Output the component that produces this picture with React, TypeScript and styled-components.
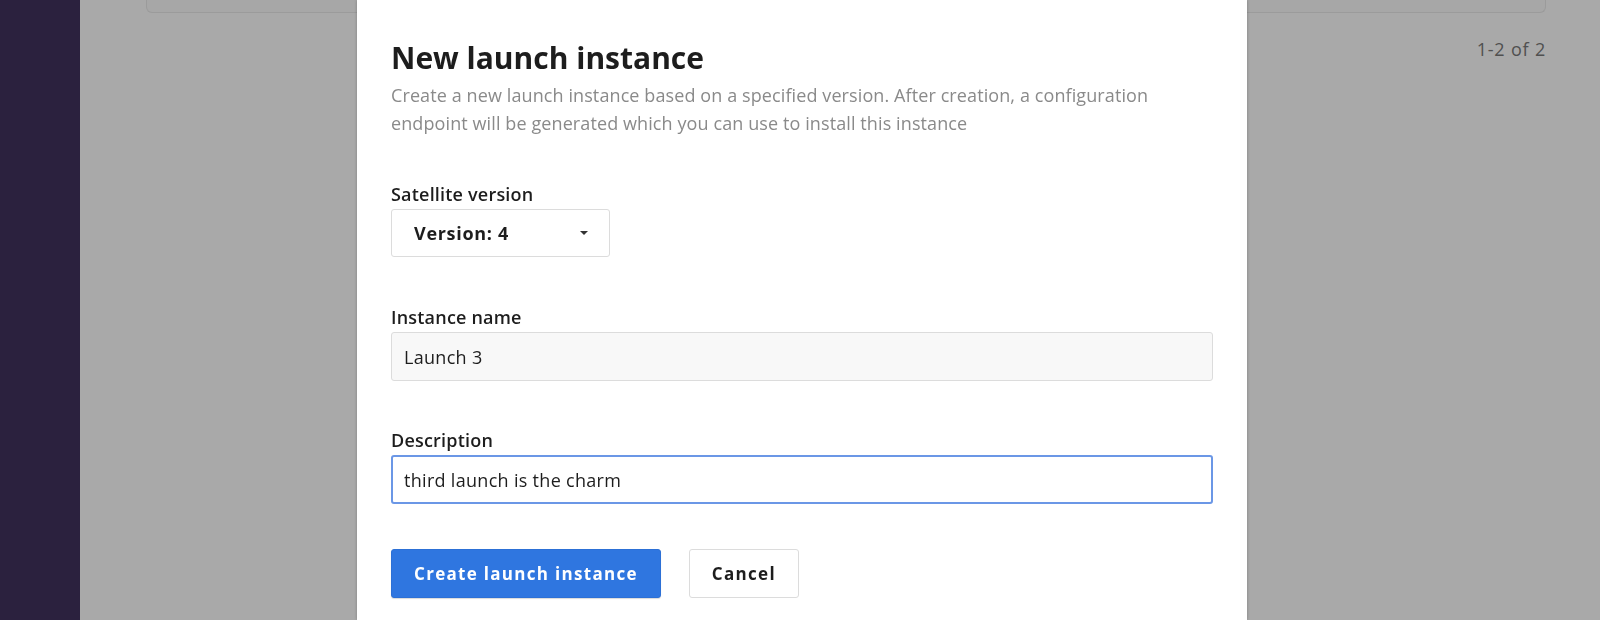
import * as React from 'react';
import styled, {createGlobalStyle} from 'styled-components';

const GlobalStyle = createGlobalStyle`
  html, body {
    margin: 0;
    padding: 0;
    height: 100%;
    overflow: hidden;
  }
  body {
    font-family: "Open Sans", "Noto Sans", "Liberation Sans", sans-serif;
    color: #1f1f1f;
  }
`;

const App = () => {
  const [version] = React.useState(4);
  const [name, setName] = React.useState('Launch 3');
  const [description, setDescription] = React.useState('third launch is the charm');
  return (
    <>
      <GlobalStyle />
      <Page>
        <Sidebar />
        <Main>
          <Card />
          <Pagination>1-2 of 2</Pagination>
        </Main>
      </Page>
      <Modal>
        <Title>New launch instance</Title>
        <Subtitle>
          Create a new launch instance based on a specified version. After creation, a configuration
          endpoint will be generated which you can use to install this instance
        </Subtitle>
        <Field $gap={46}>
          <Label>Satellite version</Label>
          <Select type="button">
            <span>Version: {version}</span>
            <Caret />
          </Select>
        </Field>
        <Field $gap={49}>
          <Label>Instance name</Label>
          <Input value={name} onChange={e => setName(e.target.value)} $muted />
        </Field>
        <Field $gap={48}>
          <Label>Description</Label>
          <Input value={description} onChange={e => setDescription(e.target.value)} $focused />
        </Field>
        <Actions>
          <Button $primary>Create launch instance</Button>
          <Button>Cancel</Button>
        </Actions>
      </Modal>
    </>
  );
};

const Page = styled.div`
  display: flex;
  height: 100vh;
  background-color: #a9a9a9;
`;

const Sidebar = styled.div`
  width: 80px;
  flex-shrink: 0;
  background-color: #2b213e;
`;

const Main = styled.div`
  flex: 1;
  padding: 0 54px 0 66px;
  display: flex;
  flex-direction: column;
`;

const Card = styled.div`
  height: 12px;
  border: 1px solid #9b9b9b;
  border-top: none;
  border-radius: 0 0 6px 6px;
  background-color: #a7a7a7;
`;

const Pagination = styled.div`
  align-self: flex-end;
  margin-top: 24px;
  font-size: 18px;
  line-height: 24px;
  letter-spacing: 0.8px;
  color: #505050;
`;

const Modal = styled.div`
  position: fixed;
  top: 0;
  bottom: 0;
  left: 357px;
  width: 890px;
  box-sizing: border-box;
  padding: 38px 34px 0;
  background-color: #fff;
  box-shadow: 0 0 3px rgba(0, 0, 0, 0.25);
  display: flex;
  flex-direction: column;
`;

const Title = styled.h1`
  margin: 0;
  font-size: 30px;
  line-height: 40px;
  font-weight: 700;
  color: #1d1d1d;
`;

const Subtitle = styled.p`
  margin: 3px 0 0;
  font-size: 18px;
  line-height: 28px;
  letter-spacing: 0.1px;
  color: #8a8a8a;
  max-width: 800px;
`;

const Field = styled.div<{$gap: number}>`
  display: flex;
  flex-direction: column;
  align-items: flex-start;
  margin-top: ${p => p.$gap}px;
`;

const Label = styled.label`
  font-size: 18px;
  line-height: 22px;
  font-weight: 600;
  letter-spacing: 0.2px;
  color: #1d1d1d;
  margin-bottom: 4px;
`;

const Select = styled.button`
  display: flex;
  align-items: center;
  justify-content: space-between;
  width: 219px;
  height: 48px;
  padding: 0 22px;
  box-sizing: border-box;
  background-color: #fff;
  border: 1px solid #dcdcdc;
  border-radius: 3px;
  font-family: inherit;
  font-size: 18px;
  font-weight: 700;
  letter-spacing: 0.7px;
  color: #1d1d1d;
`;

const Caret = styled.span`
  width: 0;
  height: 0;
  margin-right: -1px;
  border-left: 4px solid transparent;
  border-right: 4px solid transparent;
  border-top: 4px solid #333;
`;

const Input = styled.input<{$focused?: boolean; $muted?: boolean}>`
  width: 100%;
  height: 49px;
  box-sizing: border-box;
  border-radius: 3px;
  font-family: inherit;
  font-size: 18px;
  letter-spacing: 0.3px;
  color: #1d1d1d;
  outline: none;
  background-color: ${p => (p.$muted ? '#f8f8f8' : '#fff')};
  border: ${p => (p.$focused ? '2px solid #6b97e6' : '1px solid #dcdcdc')};
  padding: 0 ${p => (p.$focused ? '11px' : '12px')};
`;

const Actions = styled.div`
  display: flex;
  gap: 28px;
  margin-top: 45px;
`;

const Button = styled.button<{$primary?: boolean}>`
  height: 49px;
  padding: 0 22px;
  border-radius: 3px;
  font-family: inherit;
  font-size: 17px;
  font-weight: 700;
  letter-spacing: 1.3px;
  color: ${p => (p.$primary ? '#fff' : '#1d1d1d')};
  background-color: ${p => (p.$primary ? '#2f76e0' : '#fff')};
  border: 1px solid ${p => (p.$primary ? '#2c70d6' : '#dcdcdc')};
  box-shadow: ${p => (p.$primary ? '0 1px 1px rgba(0,0,0,0.15)' : 'none')};
`;

export default App;
